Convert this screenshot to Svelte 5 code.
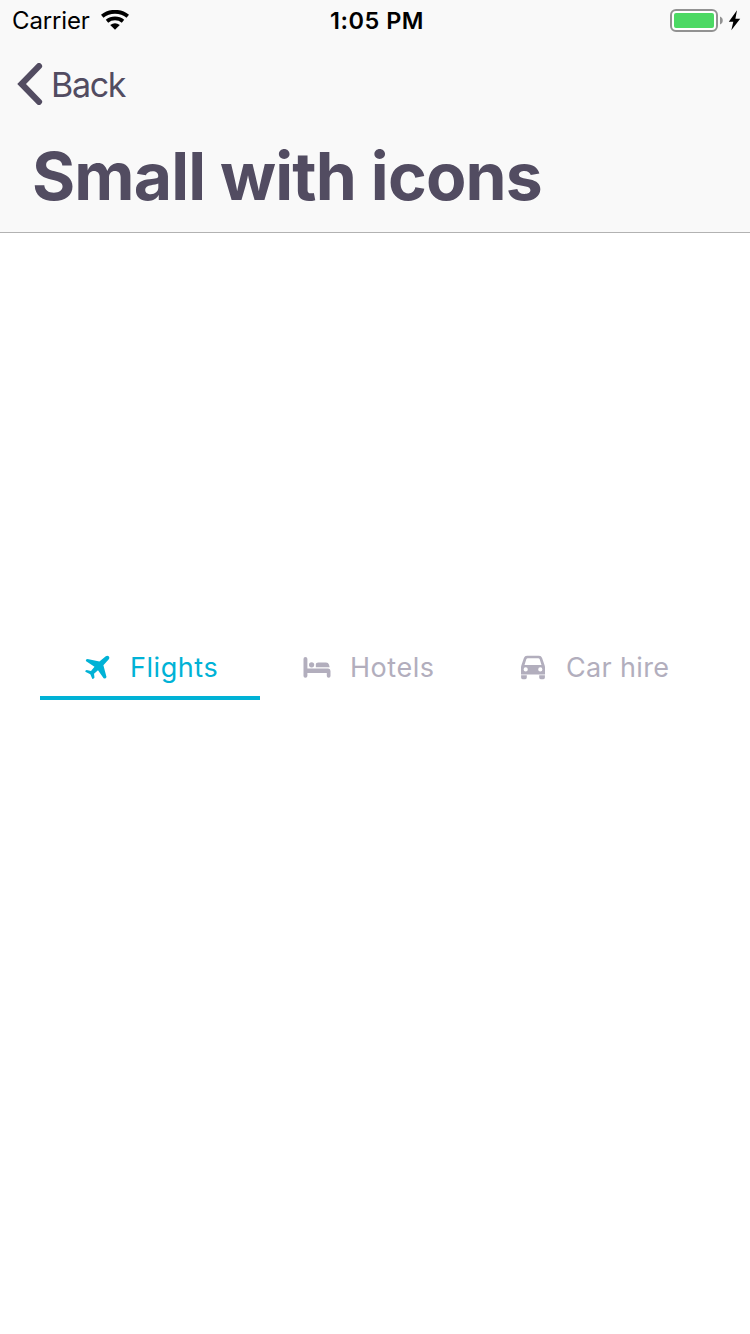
<script>
  const tabs = [
    { id: 'flights', label: 'Flights' },
    { id: 'hotels', label: 'Hotels' },
    { id: 'cars', label: 'Car hire' },
  ];
  let selected = $state('flights');
</script>

<div class="screen">
  <header>
    <div class="status">
      <div class="carrier">
        <span>Carrier</span>
        <svg width="28" height="20" viewBox="0 0 28 20" fill="none" stroke="#000">
          <path d="M1.2 6.3C8.4 .3 19.6 .3 26.8 6.3" stroke-width="3.9" />
          <path d="M6 11.2C10.6 7.4 17.4 7.4 22 11.2" stroke-width="3.8" />
          <path d="M9.2 15.1Q14 11.3 18.8 15.1L14 19.8Z" fill="#000" stroke="none" />
        </svg>
      </div>
      <span class="time">1:05 PM</span>
      <svg class="power" width="71" height="24" viewBox="0 0 71 24">
        <rect x="1" y="1" width="46" height="21" rx="5" fill="#fff" stroke="#929292" stroke-width="2" />
        <rect x="4" y="4" width="40" height="15" rx="2" fill="#4cd964" />
        <path d="M50 7.5C53.7 8.8 53.7 14.2 50 15.5Z" fill="#929292" />
        <path d="M67 1.2L58.8 12.8H63.3L61.3 21.3L70.2 9.8H65.4Z" fill="#000" />
      </svg>
    </div>
    <div class="nav">
      <svg width="26" height="42" viewBox="0 0 26 42" fill="none" stroke="#524c61" stroke-width="6.2" stroke-linecap="round" stroke-linejoin="miter">
        <path d="M22 3.2L4.6 21L22 38.8" />
      </svg>
      <span>Back</span>
    </div>
    <h1>Small with icons</h1>
  </header>

  <div class="tabs" role="tablist">
    {#each tabs as tab (tab.id)}
      <button class="tab {tab.id}" class:active={selected === tab.id} role="tab" aria-selected={selected === tab.id} onclick={() => (selected = tab.id)}>
        {#if tab.id === 'flights'}
          <svg width="28" height="28" viewBox="0 0 28 28" fill="currentColor">
            <path d="M25.7 2.2C24.8 1.4 23.7 1.5 22.8 2.2L16.4 7.6L4.5 4.9Q2.6 5 2.8 7L11.5 12.7L8 16.9L3.7 16Q2.2 16.2 2.3 17.7L7.3 20.3L9.4 24.9Q10.9 25 11.5 23.5L11 19.7L15 16.3L20.6 24.3Q22.9 24.9 23.5 22.9L20.4 11.3L25.8 5.2C26.6 4.2 26.5 3 25.7 2.2Z" />
          </svg>
        {:else if tab.id === 'hotels'}
          <svg width="28" height="28" viewBox="0 0 28 28" fill="currentColor">
            <path d="M2.4 3.1Q4.4 3.1 4.4 5.1V14.5H25.2Q27.5 14.5 27.5 17V22.1Q27.5 23.8 25.7 23.8Q23.8 23.8 23.8 22.1V19H4.4V22.1Q4.4 23.8 2.4 23.8Q.5 23.8 .5 22.1V5.1Q.5 3.1 2.4 3.1Z" />
            <circle cx="8.6" cy="10.8" r="2.6" />
            <path d="M12.8 13.2V10.7Q12.8 8.4 15.4 8.4H23Q25.4 8.4 26 10.7L26.6 13.2Z" />
          </svg>
        {:else}
          <svg width="28" height="28" viewBox="0 0 28 28" fill="currentColor">
            <path fill-rule="evenodd" d="M8 1.7H20Q22.3 1.7 23.1 4L25.5 11Q26 12.2 26 13.6V20.4H2V13.6Q2 12.2 2.5 11L4.9 4Q5.7 1.7 8 1.7ZM8.8 4.2Q7.7 4.2 7.3 5.3L5.5 10.9H22.5L20.7 5.3Q20.3 4.2 19.2 4.2ZM6.7 13.3A2.1 2.1 0 1 0 6.7 17.5A2.1 2.1 0 1 0 6.7 13.3ZM21.3 13.3A2.1 2.1 0 1 0 21.3 17.5A2.1 2.1 0 1 0 21.3 13.3Z" />
            <path d="M2.1 21.3H7.8V23.5Q7.8 25.2 6.2 25.2H3.7Q2.1 25.2 2.1 23.5ZM20.2 21.3H25.9V23.5Q25.9 25.2 24.3 25.2H21.8Q20.2 25.2 20.2 23.5Z" />
          </svg>
        {/if}
        <span>{tab.label}</span>
      </button>
    {/each}
  </div>
</div>

<style>
  :global(body) {
    margin: 0;
  }
  .screen {
    width: 750px;
    height: 1334px;
    background: #fff;
    font-family: Inter, "Liberation Sans", sans-serif;
    overflow: hidden;
  }
  header {
    box-sizing: border-box;
    height: 233px;
    background: #f9f9f9;
    border-bottom: 1px solid #b2b2b2;
    color: #524c61;
  }
  .status {
    height: 40px;
    display: grid;
    grid-template-columns: 1fr auto 1fr;
    align-items: start;
    color: #000;
    font-size: 24px;
    line-height: 40px;
  }
  .carrier {
    display: flex;
    align-items: center;
    gap: 11px;
    padding-left: 12px;
  }
  .carrier span {
    width: 78px;
    height: 40px;
    line-height: 42px;
    white-space: nowrap;
    letter-spacing: -0.15px;
  }
  .time {
    height: 40px;
    line-height: 42px;
    font-weight: 600;
    font-size: 23.5px;
    letter-spacing: 0.5px;
    padding-left: 4px;
  }
  .power {
    justify-self: end;
    margin: 9px 9px 0 0;
  }
  .nav {
    height: 88px;
    display: flex;
    align-items: center;
    gap: 8px;
    padding-left: 17px;
    font-size: 34px;
    letter-spacing: -1.3px;
  }
  h1 {
    margin: 0;
    padding: 6px 0 0 32px;
    font-size: 66px;
    line-height: 84px;
    font-weight: 700;
    letter-spacing: -0.85px;
    white-space: nowrap;
  }
  .tabs {
    display: flex;
    margin: 403px 40px 0;
  }
  .tab {
    box-sizing: border-box;
    display: flex;
    align-items: center;
    gap: 19px;
    width: 220px;
    height: 64px;
    padding: 3px 0 0 43px;
    border: 0;
    border-bottom: 4px solid transparent;
    background: none;
    color: #b2aebd;
    font: 400 27px/40px Inter, "Liberation Sans", sans-serif;
    letter-spacing: 0.55px;
    white-space: nowrap;
  }
  .tab span {
    padding-top: 1px;
  }
  .cars {
    padding-left: 39px;
    letter-spacing: 0.35px;
  }
  .active {
    color: #00b2d6;
    border-bottom-color: #00b2d6;
  }
  svg {
    display: block;
    flex: none;
  }
</style>
